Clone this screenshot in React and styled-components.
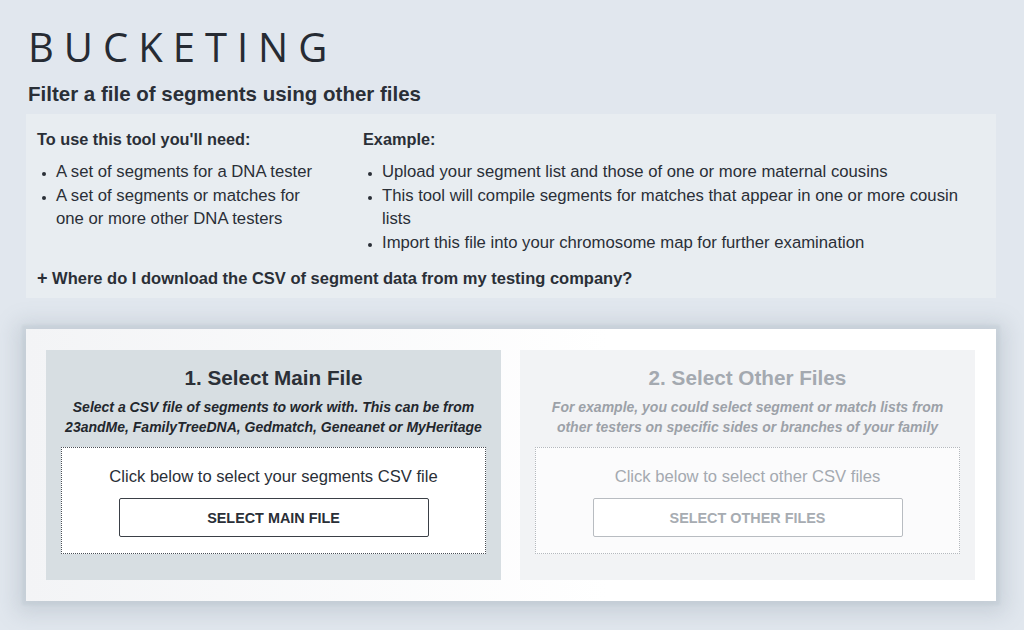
import styled, { createGlobalStyle } from "styled-components";

const GlobalStyle = createGlobalStyle`
    html, body {
        margin: 0;
        padding: 0;
        background: #e1e7ee;
    }
    body {
        font-family: "Liberation Sans", Arial, sans-serif;
        color: #2a2f37;
    }
`;

const needs = [
    "A set of segments for a DNA tester",
    "A set of segments or matches for one or more other DNA testers"
];

const example = [
    "Upload your segment list and those of one or more maternal cousins",
    "This tool will compile segments for matches that appear in one or more cousin lists",
    "Import this file into your chromosome map for further examination"
];

const steps = [
    {
        id: 1,
        title: "1. Select Main File",
        hint: ["Select a CSV file of segments to work with. This can be from", "23andMe, FamilyTreeDNA, Gedmatch, Geneanet or MyHeritage"],
        prompt: "Click below to select your segments CSV file",
        button: "Select Main File",
        active: true
    },
    {
        id: 2,
        title: "2. Select Other Files",
        hint: ["For example, you could select segment or match lists from", "other testers on specific sides or branches of your family"],
        prompt: "Click below to select other CSV files",
        button: "Select Other Files",
        active: false
    }
];

export default function App() {
    return (
        <Page>
            <GlobalStyle />
            <Title>BUCKETING</Title>
            <Subtitle>Filter a file of segments using other files</Subtitle>

            <InfoBox>
                <Columns>
                    <div>
                        <InfoHeading>To use this tool you'll need:</InfoHeading>
                        <List>
                            {needs.map(item => <li key={item}>{item}</li>)}
                        </List>
                    </div>
                    <div>
                        <InfoHeading>Example:</InfoHeading>
                        <List>
                            {example.map(item => <li key={item}>{item}</li>)}
                        </List>
                    </div>
                </Columns>
                <Expander>
                    <span>+</span> Where do I download the CSV of segment data from my testing company?
                </Expander>
            </InfoBox>

            <Card>
                {steps.map(step => (
                    <Step key={step.id} $active={step.active}>
                        <StepTitle $active={step.active}>{step.title}</StepTitle>
                        <StepHint $active={step.active}>
                            {step.hint[0]}<br />{step.hint[1]}
                        </StepHint>
                        <DropZone $active={step.active}>
                            <Prompt $active={step.active}>{step.prompt}</Prompt>
                            <SelectButton $active={step.active}>{step.button}</SelectButton>
                        </DropZone>
                    </Step>
                ))}
            </Card>
        </Page>
    );
}

const Page = styled.div`
    padding: 23px 28px 30px 26px;
    display: flex;
    flex-direction: column;
`;

const Title = styled.h1`
    margin: 0 0 0 2px;
    font-family: "Open Sans", "Liberation Sans", sans-serif;
    font-weight: 400;
    font-size: 40px;
    line-height: 48px;
    letter-spacing: 10px;
    color: #262b33;
`;

const Subtitle = styled.h2`
    margin: 11px 0 0 2px;
    font-size: 20.5px;
    line-height: 24px;
    font-weight: 700;
    color: #2a2f37;
`;

const InfoBox = styled.div`
    margin-top: 8px;
    background: #e8edf1;
    padding: 15px 11px 10px 11px;
`;

const Columns = styled.div`
    display: grid;
    grid-template-columns: 285px 1fr;
    column-gap: 41px;
`;

const InfoHeading = styled.div`
    font-size: 16.3px;
    line-height: 20px;
    font-weight: 700;
    white-space: nowrap;
`;

const List = styled.ul`
    margin: 11px 0 0 0;
    padding-left: 19px;
    font-size: 16.7px;
    line-height: 23.5px;
    li::marker {
        font-size: 12px;
    }
`;

const Expander = styled.div`
    margin-top: 14px;
    font-size: 16.5px;
    line-height: 20px;
    font-weight: 700;
    span {
        font-size: 18px;
    }
`;

const Card = styled.div`
    margin-top: 31px;
    display: grid;
    grid-template-columns: 1fr 1fr;
    gap: 19px;
    padding: 21px 21px 21px 20px;
    background: linear-gradient(to right, #f3f4f6, #ffffff 60%);
    box-shadow: 0 0 2px 4px rgba(175, 186, 197, 0.22), 0 3px 20px 10px rgba(110, 125, 140, 0.2);
`;

const Step = styled.div`
    background: ${p => p.$active ? "#d7dee2" : "#f2f3f5"};
    padding: 16px 15px 26px;
    display: flex;
    flex-direction: column;
    align-items: stretch;
    text-align: center;
`;

const StepTitle = styled.div`
    font-size: 20.7px;
    line-height: 24px;
    font-weight: 700;
    color: ${p => p.$active ? "#2b3037" : "#a4a9b0"};
`;

const StepHint = styled.div`
    margin-top: 8px;
    font-size: 14px;
    line-height: 19.5px;
    font-weight: 700;
    font-style: italic;
    color: ${p => p.$active ? "#23272d" : "#9ca1a8"};
`;

const DropZone = styled.div`
    margin-top: 10px;
    background: ${p => p.$active ? "#ffffff" : "#fbfbfc"};
    border: 1px dotted ${p => p.$active ? "#4a4f56" : "#b4b8bd"};
    padding: 19px 0 16px;
    display: flex;
    flex-direction: column;
    align-items: center;
`;

const Prompt = styled.div`
    font-size: 16.6px;
    line-height: 20px;
    color: ${p => p.$active ? "#2a2f37" : "#a4a9b0"};
`;

const SelectButton = styled.button`
    margin-top: 11px;
    width: 310px;
    height: 39px;
    background: #ffffff;
    border: 1px solid ${p => p.$active ? "#3a3f46" : "#b8bcc1"};
    border-radius: 2px;
    font-family: "Liberation Sans", Arial, sans-serif;
    font-size: 14.4px;
    font-weight: 700;
    text-transform: uppercase;
    color: ${p => p.$active ? "#2a2f37" : "#a7acb2"};
    cursor: pointer;
`;
